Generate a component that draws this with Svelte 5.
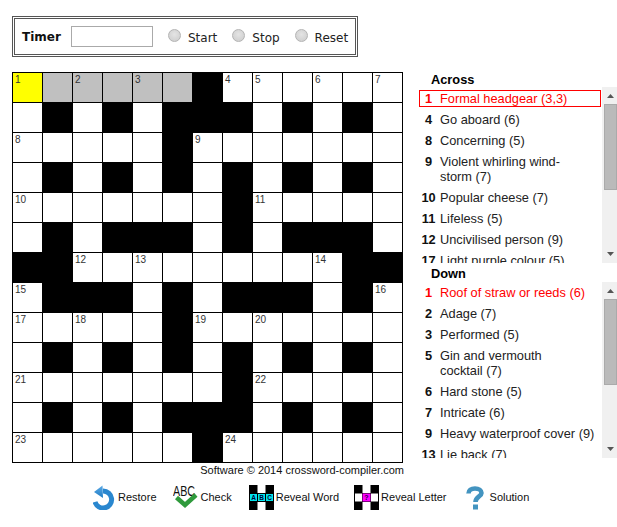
<script>
    // 13x13 puzzle, # is a blocked square
    const rows = [
        "......#......",
        ".#.#.###.#.#.",
        ".....#.......",
        ".#.#.#.#.#.#.",
        ".......#.....",
        ".#.###.#.###.",
        "##.........##",
        ".###.#.###.#.",
        ".....#.......",
        ".#.#.#.#.#.#.",
        ".......#.....",
        ".#.#.###.#.#.",
        "......#......",
    ];

    const numbers = {
        "0,0": 1, "0,2": 2, "0,4": 3, "0,7": 4, "0,8": 5, "0,10": 6, "0,12": 7,
        "2,0": 8, "2,6": 9, "4,0": 10, "4,8": 11,
        "6,2": 12, "6,4": 13, "6,10": 14, "7,0": 15, "7,12": 16,
        "8,0": 17, "8,2": 18, "8,6": 19, "8,8": 20,
        "10,0": 21, "10,8": 22, "12,0": 23, "12,7": 24,
    };

    const cells = rows.flatMap((row, r) =>
        [...row].map((ch, c) => ({
            key: `${r},${c}`,
            black: ch === "#",
            num: numbers[`${r},${c}`],
            current: r === 0 && c === 0,
            word: r === 0 && c > 0 && c < 6,
        }))
    );

    const across = [
        [1, "Formal headgear (3,3)"],
        [4, "Go aboard (6)"],
        [8, "Concerning (5)"],
        [9, "Violent whirling wind-storm\u00a0(7)"],
        [10, "Popular cheese (7)"],
        [11, "Lifeless (5)"],
        [12, "Uncivilised person (9)"],
        [17, "Light purple colour (5)"],
    ];
    const down = [
        [1, "Roof of straw or reeds (6)"],
        [2, "Adage (7)"],
        [3, "Performed (5)"],
        [5, "Gin and vermouth cocktail\u00a0(7)"],
        [6, "Hard stone (5)"],
        [7, "Intricate (6)"],
        [9, "Heavy waterproof cover (9)"],
        [13, "Lie back (7)"],
    ];
</script>

<div class="page">
    <div class="timer">
        <b>Timer</b>
        <input class="clock" type="text" />
        <label><input type="radio" name="t" />Start</label>
        <label><input type="radio" name="t" />Stop</label>
        <label><input type="radio" name="t" />Reset</label>
    </div>

    <div class="main">
        <div class="left">
            <div class="grid">
                {#each cells as cell (cell.key)}
                    <div class="cell" class:black={cell.black} class:current={cell.current} class:word={cell.word}>
                        {#if cell.num}<span>{cell.num}</span>{/if}
                    </div>
                {/each}
            </div>
            <div class="credit">Software © 2014 crossword-compiler.com</div>
        </div>

        <div class="clues">
            <h4>Across</h4>
            <div class="pane">
                <div class="list">
                    {#each across as [n, text], i}
                        <div class="clue" class:selected={i === 0}><b>{n}</b><span>{text}</span></div>
                    {/each}
                </div>
                <div class="scrollbar">
                    <svg class="up" width="7" height="4" viewBox="0 0 7 4"><path d="M3.5 0L7 4H0z" /></svg>
                    <div class="thumb"></div>
                    <svg class="dn" width="7" height="4" viewBox="0 0 7 4"><path d="M0 0H7L3.5 4z" /></svg>
                </div>
            </div>

            <h4 class="second">Down</h4>
            <div class="pane">
                <div class="list down">
                    {#each down as [n, text], i}
                        <div class="clue" class:red={i === 0}><b>{n}</b><span>{text}</span></div>
                    {/each}
                </div>
                <div class="scrollbar">
                    <svg class="up" width="7" height="4" viewBox="0 0 7 4"><path d="M3.5 0L7 4H0z" /></svg>
                    <div class="thumb"></div>
                    <svg class="dn" width="7" height="4" viewBox="0 0 7 4"><path d="M0 0H7L3.5 4z" /></svg>
                </div>
            </div>
        </div>
    </div>

    <div class="buttons">
        <div class="btn">
            <svg width="22" height="25" viewBox="0 0 22 25">
                <defs>
                    <linearGradient id="blue" x1="0" y1="0" x2="0" y2="1">
                        <stop offset="0" stop-color="#5aa9e6" />
                        <stop offset="1" stop-color="#1f7cc4" />
                    </linearGradient>
                </defs>
                <path d="M10 6A8.5 8.5 0 1 1 2 17" fill="none" stroke="#2a87cf" stroke-width="5" />
                <path d="M9.5 0.5L1 7L10 13z" fill="url(#blue)" />
            </svg>
            Restore
        </div>
        <div class="btn">
            <svg width="25" height="25" viewBox="0 0 25 25">
                <text x="0" y="11" font-family="Liberation Sans" font-size="14" textLength="22" lengthAdjust="spacingAndGlyphs" fill="#111">ABC</text>
                <path d="M3.5 12.5L12 20L23 10" fill="none" stroke="#2f9a3c" stroke-width="4.5" />
            </svg>
            Check
        </div>
        <div class="btn reveal reveal-word">
            <svg width="25" height="25" viewBox="0 0 25 25">
                <rect width="25" height="25" fill="#000" />
                <rect x="8.5" width="8" height="8" fill="#fff" />
                <rect x="8.5" y="17" width="8" height="8" fill="#fff" />
                <rect x="1" y="9" width="7" height="7" fill="#00e5ee" />
                <rect x="9" y="9" width="7" height="7" fill="#00e5ee" />
                <rect x="17" y="9" width="7" height="7" fill="#00e5ee" />
                <g font-family="Liberation Sans" font-size="6.5" font-weight="bold" text-anchor="middle" fill="#003">
                    <text x="4.5" y="15">A</text>
                    <text x="12.5" y="15">B</text>
                    <text x="20.5" y="15">C</text>
                </g>
            </svg>
            Reveal Word
        </div>
        <div class="btn reveal reveal-letter">
            <svg width="25" height="25" viewBox="0 0 25 25">
                <rect width="25" height="25" fill="#000" />
                <rect x="8.5" width="8" height="8" fill="#fff" />
                <rect x="8.5" y="17" width="8" height="8" fill="#fff" />
                <rect x="1" y="8.5" width="7" height="8" fill="#fff" />
                <rect x="17" y="8.5" width="7" height="8" fill="#fff" />
                <rect x="8.5" y="8.5" width="8" height="8" fill="#f0f" />
                <text x="12.5" y="15" font-family="Liberation Sans" font-size="7" font-weight="bold" text-anchor="middle" fill="#204">?</text>
            </svg>
            Reveal Letter
        </div>
        <div class="btn solution">
            <svg width="18" height="24" viewBox="0 0 18 24">
                <path d="M2.5 7.5C2.5 4.5 5 2.5 9 2.5C13 2.5 15.5 4.5 15.5 7C15.5 10.5 9.5 10.5 9.5 16" fill="none" stroke="#4394c0" stroke-width="4.6" />
                <rect x="7" y="18.5" width="5" height="5" fill="#4394c0" />
            </svg>
            Solution
        </div>
    </div>
</div>

<style>
    :global(body) {
        margin: 0;
        background: #fff;
        overflow: hidden;
    }
    .page {
        width: 617px;
        height: 527px;
        overflow: hidden;
        padding: 16px 0 0 12px;
        box-sizing: border-box;
        font-family: "Liberation Sans", Arial, sans-serif;
        color: #000;
    }

    .timer {
        width: 346px;
        height: 41px;
        box-sizing: border-box;
        border: 3px double #555;
        display: flex;
        align-items: center;
        padding-left: 7px;
        font-family: "DejaVu Sans", Verdana, sans-serif;
        font-size: 12px;
    }
    .timer b {
        width: 49px;
        flex: none;
        color: #111;
    }
    .clock {
        width: 82px;
        height: 21px;
        flex: none;
        box-sizing: border-box;
        margin: 0 15px 0 0;
        border: 1px solid #aaa;
        background: #fff;
    }
    .timer label {
        display: flex;
        flex: none;
        align-items: center;
        margin: 3px 15px 0 0;
        color: #222;
    }
    .timer label:last-child {
        margin-right: 0;
    }
    .timer input[type="radio"] {
        appearance: none;
        width: 13px;
        height: 13px;
        margin: -5px 7px 0 0;
        border-radius: 50%;
        border: 1px solid #b4b4b4;
        background: radial-gradient(circle at 50% 40%, #e4e4e4, #cbcbcb);
        box-sizing: border-box;
    }

    .main {
        display: flex;
        margin-top: 15px;
    }
    .grid {
        width: 391px;
        display: grid;
        grid-template-columns: repeat(13, 29px);
        grid-auto-rows: 29px;
        gap: 1px;
        padding: 1px;
        box-sizing: border-box;
        background: #000;
    }
    .cell {
        background: #fff;
        position: relative;
    }
    .cell span {
        position: absolute;
        left: 2px;
        top: 2px;
        font-size: 10px;
        line-height: 10px;
        color: #333;
    }
    .black { background: #000; }
    .current { background: #ff0; }
    .word { background: #c0c0c0; }

    .credit {
        font-size: 11px;
        line-height: 13px;
        margin-top: 1px;
        text-align: right;
        color: #111;
        width: 392px;
    }

    .clues {
        width: 198px;
        margin-left: 15px;
        flex: none;
        font-size: 12.8px;
    }
    h4 {
        margin: 0;
        padding-left: 12px;
        height: 15px;
        line-height: 15px;
        font-size: 12.8px;
        font-weight: bold;
    }
    h4.second {
        height: 19px;
        line-height: 22px;
    }
    .pane {
        display: flex;
        height: 176px;
    }
    .list {
        width: 183px;
        overflow: hidden;
        padding-top: 3px;
        box-sizing: border-box;
    }
    .list.down {
        padding-top: 2px;
    }
    .clue {
        display: flex;
        border: 1px solid transparent;
        line-height: 15px;
        margin: 0 1px 4px 0;
        color: #222;
    }
    .clue b {
        width: 17px;
        flex: none;
        text-align: center;
        margin-right: 3px;
        color: #111;
    }
    .clue span {
        width: 160px;
        flex: none;
    }
    .selected, .selected b, .red, .red b {
        color: #f00;
    }
    .selected {
        border-color: #f00;
    }

    .scrollbar {
        width: 15px;
        background: #f0f0f0;
        position: relative;
    }
    .scrollbar svg {
        position: absolute;
        left: 5px;
        fill: #555;
    }
    .up { top: 7px; fill: #999; }
    .dn { bottom: 7px; }
    .thumb {
        position: absolute;
        left: 2px;
        right: 0;
        top: 17px;
        height: 86px;
        box-sizing: border-box;
        background: #bababa;
        border: 1px solid #aaa;
    }

    .buttons {
        display: flex;
        align-items: center;
        gap: 16px;
        margin-top: 6px;
        padding-left: 81px;
        font-size: 11px;
        color: #111;
    }
    .buttons svg {
        margin-top: 2px;
    }
    .btn {
        display: flex;
        align-items: center;
        gap: 3px;
    }
    .reveal {
        gap: 2px;
    }
    .reveal-word {
        margin-left: 1px;
    }
    .reveal-letter {
        margin-left: -1px;
    }
    .solution {
        margin-left: 3px;
        gap: 6px;
    }
</style>
